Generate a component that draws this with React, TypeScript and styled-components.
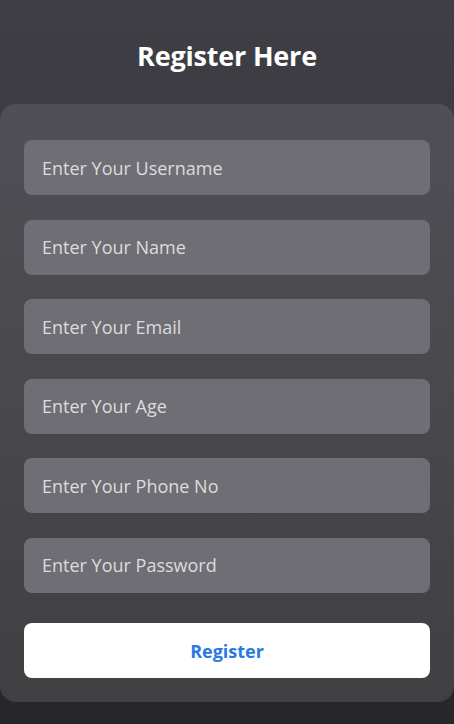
import React from "react";
import styled, { createGlobalStyle } from "styled-components";

const Global = createGlobalStyle`
  html, body { margin: 0; padding: 0; }
  body {
    min-height: 724px;
    background: linear-gradient(180deg, #3e3e44 0%, #38383d 50%, #262628 100%);
    font-family: "Open Sans", "Noto Sans", sans-serif;
  }
`;

const Page = styled.div`
  display: flex;
  flex-direction: column;
  align-items: stretch;
  height: 724px;
`;

const Title = styled.h1`
  margin: 0;
  padding: 36px 0 28px;
  text-align: center;
  color: #ffffff;
  font-size: 27px;
  font-weight: 700;
  line-height: 40px;
  letter-spacing: -0.2px;
`;

const Card = styled.form`
  margin: 0;
  padding: 36px 24px 24px;
  border-radius: 16px;
  background: linear-gradient(180deg, #4f4f55 0%, #48484d 50%, #404043 100%);
  display: flex;
  flex-direction: column;
  gap: 24.5px;
`;

const Input = styled.input`
  height: 55px;
  box-sizing: border-box;
  border: none;
  border-radius: 8px;
  background: #6f6e74;
  padding: 0 18px;
  font-family: inherit;
  font-size: 18px;
  color: #e0e0e0;
  outline: none;
  &::placeholder { color: #dcdcdf; }
`;

const Button = styled.button`
  margin-top: 6px;
  height: 55px;
  border: none;
  border-radius: 8px;
  background: #ffffff;
  color: #2a78e4;
  font-family: inherit;
  font-size: 18px;
  font-weight: 700;
  cursor: pointer;
`;

const fields = [
  "Enter Your Username",
  "Enter Your Name",
  "Enter Your Email",
  "Enter Your Age",
  "Enter Your Phone No",
  "Enter Your Password",
];

export default function App() {
  return (
    <>
      <Global />
      <Page>
        <Title>Register Here</Title>
        <Card onSubmit={(e) => e.preventDefault()}>
          {fields.map((f) => (
            <Input key={f} placeholder={f} type={f.includes("Password") ? "password" : "text"} />
          ))}
          <Button type="submit">Register</Button>
        </Card>
      </Page>
    </>
  );
}
